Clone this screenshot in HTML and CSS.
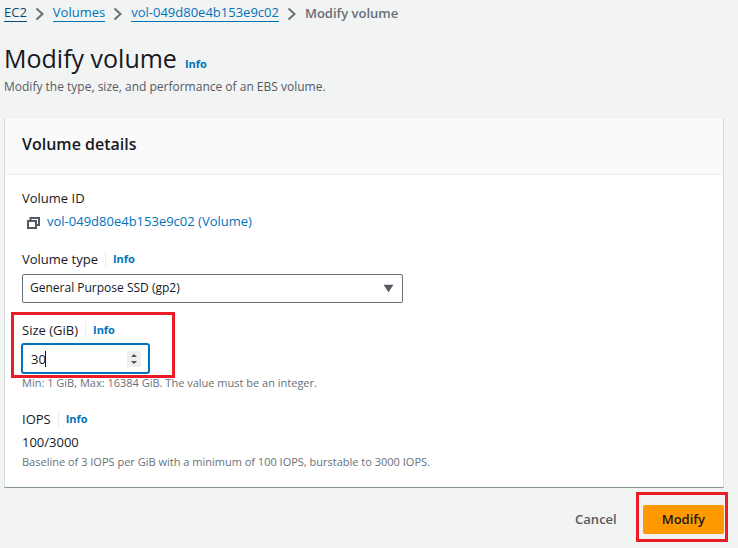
FILE: index.html
```html
<!DOCTYPE html>
<html lang="en">
<head>
<meta charset="utf-8">
<meta name="viewport" content="width=device-width, initial-scale=1">
<title>Modify volume</title>
<link rel="stylesheet" href="styles.css">
</head>
<body>
<nav class="breadcrumbs" aria-label="Breadcrumbs">
  <a class="crumb crumb-visited" href="#">EC2</a>
  <svg class="chevron" viewBox="0 0 10 14" aria-hidden="true"><path d="M1.500 1.500 7.500 7l-6 5.500"/></svg>
  <a class="crumb" href="#">Volumes</a>
  <svg class="chevron" viewBox="0 0 10 14" aria-hidden="true"><path d="M1.500 1.500 7.500 7l-6 5.500"/></svg>
  <a class="crumb" href="#">vol-049d80e4b153e9c02</a>
  <svg class="chevron" viewBox="0 0 10 14" aria-hidden="true"><path d="M1.500 1.500 7.500 7l-6 5.500"/></svg>
  <span class="current">Modify volume</span>
</nav>
<main>
  <header class="page-header">
    <div class="title-row"><h1>Modify volume</h1><a class="info" href="#">Info</a></div>
    <p class="description">Modify the type, size, and performance of an EBS volume.</p>
  </header>
  <form>
    <section class="card">
      <h2>Volume details</h2>
      <div class="fields">
        <div class="field">
          <div class="label-row">Volume ID</div>
          <div class="volume-link">
            <svg class="copy" viewBox="0 0 14 14" aria-hidden="true"><path d="M4.500 4.500V2H13v7h-2.500M2 5h8v7H2z"/></svg>
            <a href="#">vol-049d80e4b153e9c02 (Volume)</a>
          </div>
        </div>
        <div class="field">
          <div class="label-row"><label for="type">Volume type</label><a class="info divided" href="#">Info</a></div>
          <div class="select-wrap">
            <select id="type"><option>General Purpose SSD (gp2)</option></select>
            <svg class="arrow" viewBox="0 0 10 8" aria-hidden="true"><path d="M.5.5h9L5 7.500z"/></svg>
          </div>
        </div>
        <div class="field highlighted">
          <div class="label-row"><label for="size">Size (GiB)</label><a class="info divided" href="#">Info</a></div>
          <div class="number-wrap">
            <input id="size" type="number" value="30" min="1" max="16384">
            <span class="caret"></span>
            <svg class="stepper" viewBox="0 0 14 16" aria-hidden="true"><path d="M4 6 7 3l3 3zM4 10l3 3 3-3z"/></svg>
          </div>
          <p class="hint">Min: 1 GiB, Max: 16384 GiB. The value must be an integer.</p>
          <span class="marker size-marker"></span>
        </div>
        <div class="field">
          <div class="label-row">IOPS<a class="info divided" href="#">Info</a></div>
          <div class="value">100/3000</div>
          <p class="hint">Baseline of 3 IOPS per GiB with a minimum of 100 IOPS, burstable to 3000 IOPS.</p>
        </div>
      </div>
    </section>
    <div class="actions">
      <button class="cancel" type="button">Cancel</button>
      <div class="highlighted">
        <button class="primary" type="submit">Modify</button>
        <span class="marker button-marker"></span>
      </div>
    </div>
  </form>
</main>
</body>
</html>
```
FILE: styles.css
```css
* { box-sizing: border-box; }
body {
  margin: 0;
  padding: 3px 14px 12px 4px;
  background: #f2f3f3;
  color: #16191f;
  font: 13px/20px "Open Sans", "Noto Sans", sans-serif;
}
h1, h2, p { margin: 0; font-weight: 400; }
a { color: #0073bb; text-decoration: none; }
select, input, button { font: inherit; color: inherit; }

.breadcrumbs { display: flex; align-items: center; gap: 8px; }
.crumb { line-height: 17px; border-bottom: 1px solid #0073bb; }
.crumb-visited { color: #0a4a74; border-color: #0a4a74; }
.chevron { width: 10px; height: 14px; margin-top: 2px; fill: none; stroke: #687078; stroke-width: 2; }
.current { color: #687078; font-weight: 600; }

.page-header { padding: 17px 0 20px; }
.title-row { display: flex; align-items: baseline; gap: 8px; }
h1 { font-size: 25px; line-height: 37px; }
.info { font-size: 11px; font-weight: 700; }
.description { color: #545b64; font-size: 12px; }

.card {
  background: #fff;
  border: 1px solid #d5dbdb;
  border-top-color: #eaeded;
  border-bottom-color: #879596;
}
h2 {
  padding: 16px 17px 20px;
  background: #fafafa;
  border-bottom: 1px solid #eaeded;
  font-size: 16px;
  font-weight: 600;
}
.fields { display: grid; gap: 17px; padding: 13px 17px 16px; }
.label-row { display: flex; align-items: center; }
.divided { margin-left: 7px; padding-left: 7px; border-left: 1px solid #eaeded; line-height: 16px; }
.volume-link { display: flex; align-items: center; gap: 7px; padding: 3px 0 1px 4px; }
.copy { width: 14px; height: 14px; margin-top: 3px; fill: none; stroke: #545b64; stroke-width: 2; }
.select-wrap { position: relative; width: 381px; max-width: 100%; margin-top: 5px; }
.select-wrap select {
  display: block;
  width: 100%;
  height: 29px;
  padding: 0 24px 1px 7px;
  appearance: none;
  background: #fff;
  border: 1px solid #687078;
  border-radius: 2px;
  font-size: 12px;
}
.arrow { position: absolute; top: 10px; right: 9px; width: 11px; height: 9px; fill: #545b64; pointer-events: none; }
.number-wrap { position: relative; width: 129px; margin: 3px 0 0 -1px; }
.number-wrap input {
  display: block;
  width: 100%;
  height: 31px;
  padding: 0 24px 0 8px;
  appearance: textfield;
  background: #fff;
  border: 2px solid #0073bb;
  border-radius: 3px;
}
.number-wrap input::-webkit-inner-spin-button { display: none; }
.caret { position: absolute; top: 8px; left: 24px; width: 1px; height: 16px; background: #16191f; }
.stepper { position: absolute; top: 8px; right: 9px; width: 14px; height: 16px; background: #efefef; fill: #505050; pointer-events: none; }
.hint { color: #687078; font-size: 11px; line-height: 18px; }
.value { padding: 3px 0 1px; }
.highlighted { position: relative; }
.marker { position: absolute; border: 3px solid #ec1c24; pointer-events: none; }
.size-marker { inset: -8px auto 14px -11px; width: 164px; }
.button-marker { inset: -13px -4px -8px -7px; }

.actions { display: flex; justify-content: flex-end; align-items: center; gap: 7px; padding-top: 17px; }
button { height: 29px; padding: 0 19px; border: 0; border-radius: 2px; font-weight: 600; }
.cancel { padding-bottom: 2px; background: transparent; color: #545b64; }
.primary { display: block; padding-bottom: 2px; background: #ff9900; color: #16191f; }
```
